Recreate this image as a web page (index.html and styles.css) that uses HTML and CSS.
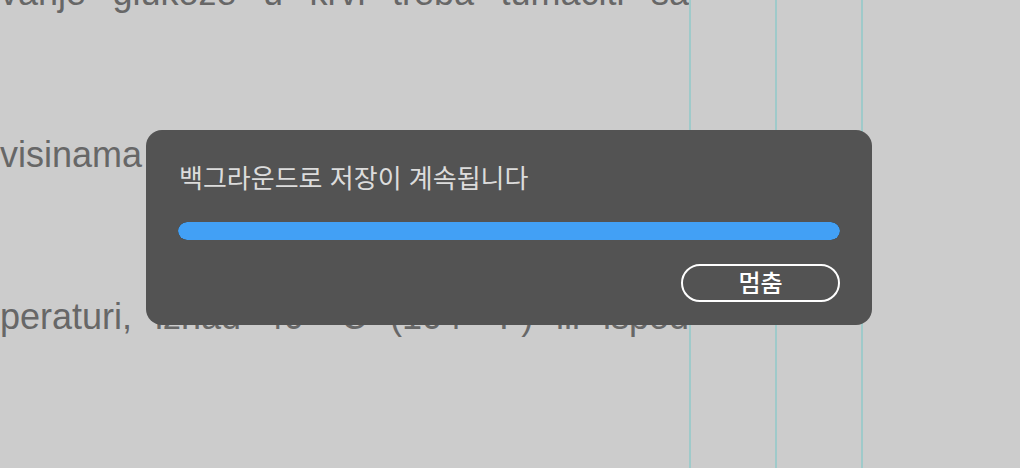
FILE: index.html
```html
<!DOCTYPE html>
<html lang="ko">
<head>
<meta charset="utf-8">
<title>저장</title>
<link rel="stylesheet" href="styles.css">
</head>
<body>
<div class="page">
  <div class="col-text">
    <div class="line just">vanje glukoze u krvi treba tumačiti sa</div>
    <div class="line">visinama</div>
    <div class="line just">peraturi, iznad 40 °C (104 °F) ili ispod</div>
  </div>
  <div class="col"></div>
  <div class="col"></div>
  <div class="col"></div>
</div>
<div class="dialog">
  <div class="dialog-title">백그라운드로 저장이 계속됩니다</div>
  <div class="progress"><div class="progress-fill" style="width:100%"></div></div>
  <div class="actions">
    <button class="btn-stop">멈춤</button>
  </div>
</div>
</body>
</html>
```
FILE: styles.css
```css
html, body {
  margin: 0;
  padding: 0;
  width: 1020px;
  height: 468px;
  overflow: hidden;
  background: #cccccc;
}
.page {
  display: flex;
  height: 468px;
}
.col-text {
  width: 689px;
  flex: none;
  margin-top: -88px;
  font-family: "Liberation Sans", Arial, sans-serif;
  font-size: 36px;
  line-height: 162px;
  color: #676767;
  overflow: hidden;
}
.line {
  white-space: nowrap;
}
.line.just {
  white-space: normal;
  text-align: justify;
  text-align-last: justify;
}
.col {
  flex: none;
  width: 84px;
  border-left: 2px solid #9fcaca;
}
.dialog {
  position: absolute;
  left: 146px;
  top: 130px;
  width: 726px;
  box-sizing: border-box;
  padding: 29px 32px 23px;
  background: #535353;
  border-radius: 16px;
  display: flex;
  flex-direction: column;
}
.dialog-title {
  font-family: "Noto Sans CJK KR", "Noto Sans", sans-serif;
  font-size: 26px;
  line-height: 36px;
  color: #dcdcdc;
  padding-left: 1px;
}
.progress {
  margin-top: 27px;
  height: 18px;
  border-radius: 9px;
  background: #3a3a3a;
  overflow: hidden;
}
.progress-fill {
  height: 100%;
  background: #42a0f5;
  border-radius: 9px;
}
.actions {
  margin-top: 24px;
  display: flex;
  justify-content: flex-end;
}
.btn-stop {
  width: 159px;
  height: 38px;
  box-sizing: border-box;
  border: 2px solid #ffffff;
  border-radius: 19px;
  background: transparent;
  color: #ffffff;
  font-family: "Noto Sans CJK KR", "Noto Sans", sans-serif;
  font-size: 24px;
  font-weight: 500;
  line-height: 1;
  padding: 0 0 2px;
}
```
